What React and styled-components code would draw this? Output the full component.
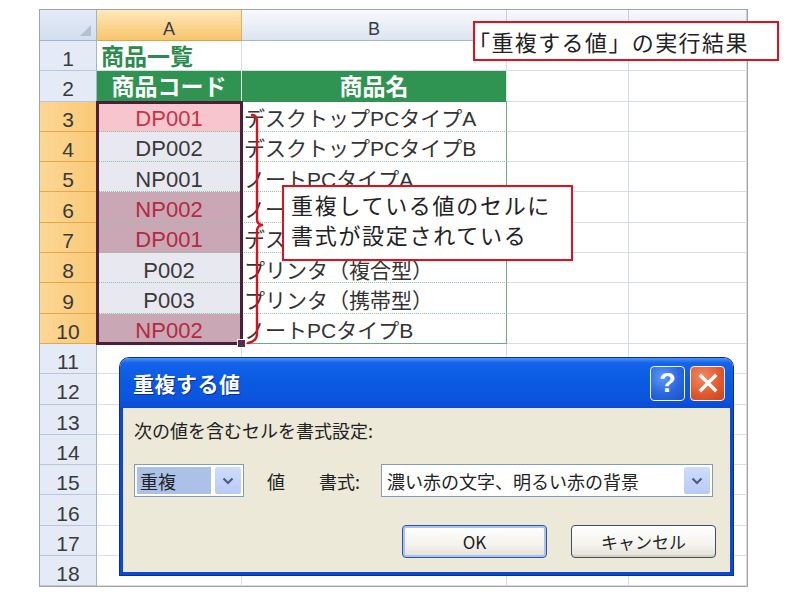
import React from 'react';
import styled, { createGlobalStyle, css } from 'styled-components';

const Global = createGlobalStyle`
  html, body { margin: 0; padding: 0; background: #fff; }
  body { font-family: "Liberation Sans", "Noto Sans CJK JP", sans-serif; }
`;

const JP = `"Liberation Sans", "Noto Sans CJK JP", sans-serif`;

const Page = styled.div`
  position: relative;
  width: 800px;
  height: 600px;
  overflow: hidden;
  background: #fff;
  padding: 9px 0 0 39px;
  box-sizing: border-box;
`;

const Sheet = styled.div`
  width: 707px;
  height: 576px;
  border: 1px solid #a3a3a3;
  display: grid;
  grid-template-columns: 57px 145px 265px 122px 1fr;
  grid-template-rows: 31px repeat(18, 30.3px);
  overflow: hidden;
`;

const Corner = styled.div`
  grid-row: 1;
  grid-column: 1;
  position: relative;
  background: linear-gradient(#e3ebf6, #d3dfef);
  border-right: 1px solid #9eb6ce;
  border-bottom: 1px solid #9eb6ce;
  &::after {
    content: '';
    position: absolute;
    right: 5px;
    bottom: 4px;
    border-left: 11px solid transparent;
    border-bottom: 11px solid #b3c1d3;
  }
`;

const ColHead = styled.div`
  grid-row: 1;
  grid-column: ${(p) => p.$c};
  display: flex;
  align-items: center;
  justify-content: center;
  font: 18px ${JP};
  color: #333d4a;
  padding-top: 8px;
  box-sizing: border-box;
  border-right: 1px solid ${(p) => (p.$sel ? '#e9ae5c' : '#c3d0e0')};
  border-bottom: 1px solid ${(p) => (p.$sel ? '#e2a24a' : '#9eb6ce')};
  background: ${(p) =>
    p.$sel
      ? 'linear-gradient(#fde9bd, #fbd692 50%, #f8c56c)'
      : 'linear-gradient(#f7f9fd, #e9eef6 55%, #dde4ee)'};
`;

const RowHead = styled.div`
  grid-row: ${(p) => p.$r + 1};
  grid-column: 1;
  display: flex;
  align-items: center;
  justify-content: center;
  font: 21px ${JP};
  color: #3a3a3a;
  padding-top: 7px;
  box-sizing: border-box;
  border-right: 1px solid #9eb6ce;
  border-bottom: 1px solid ${(p) => (p.$sel ? '#e8a648' : '#b6c7dc')};
  background: ${(p) => (p.$sel ? 'linear-gradient(90deg, #fcd796, #f9c977)' : '#e4ebf6')};
`;

const toneColors = {
  active: { bg: '#f7c5cd', fg: '#c83346' },
  dup: { bg: '#c9a7b5', fg: '#b52a40' },
  sel: { bg: '#e8e8f1', fg: '#3a3a3a' },
};

const Cell = styled.div`
  grid-row: ${(p) => p.$r + 1};
  grid-column: ${(p) => p.$c};
  box-sizing: border-box;
  display: flex;
  align-items: center;
  overflow: hidden;
  white-space: nowrap;
  line-height: 1.1;
  border-right: 1px solid #d6dce8;
  border-bottom: 1px solid #d6dce8;
  background: #fff;

  ${(p) =>
    p.$kind === 'title' &&
    css`
      font: 700 23px/1.1 ${JP};
      color: #2b8c4d;
      padding: 4px 0 0 4px;
    `}

  ${(p) =>
    p.$kind === 'head' &&
    css`
      justify-content: center;
      font: 700 23px/1.1 ${JP};
      color: #fff;
      background: #2f9352;
      padding-top: 3px;
      border-right-color: #d7e8dd;
      border-bottom-color: #2f9352;
    `}

  ${(p) =>
    p.$kind === 'code' &&
    css`
      justify-content: center;
      font: 22px/1.1 ${JP};
      padding-top: 6px;
      background: ${toneColors[p.$tone].bg};
      color: ${toneColors[p.$tone].fg};
      border-bottom: 1px dotted #8fc3a2;
    `}

  ${(p) =>
    p.$kind === 'name' &&
    css`
      font: 21px/1.1 ${JP};
      color: #333;
      padding: 5px 0 0 2px;
      border-right: 1px solid #68ad82;
      border-bottom: ${p.$last ? '1px solid #68ad82' : '1px dotted #8fc3a2'};
    `}
`;

const Selection = styled.div`
  grid-row: 4 / 12;
  grid-column: 2;
  position: relative;
  z-index: 2;
  border: 3px solid #4a1f37;
  margin: -1px;
  pointer-events: none;
`;

const FillHandle = styled.span`
  position: absolute;
  right: -6px;
  bottom: -6px;
  width: 7px;
  height: 7px;
  background: #5b2a47;
  border: 1px solid #fff;
`;

const BraceHolder = styled.div`
  grid-row: 4 / 12;
  grid-column: 3;
  z-index: 3;
  justify-self: start;
  margin-left: 4px;
  width: 22px;
  pointer-events: none;
`;

const Callout = styled.div`
  position: absolute;
  left: ${(p) => p.$x}px;
  top: ${(p) => p.$y}px;
  width: ${(p) => p.$w}px;
  height: ${(p) => p.$h}px;
  box-sizing: border-box;
  background: #fff;
  border: 2px solid #e1101c;
  font: 22px "Noto Sans CJK JP", sans-serif;
  color: #222;
  z-index: 5;
`;

const CalloutTitle = styled(Callout)`
  display: flex;
  align-items: center;
  padding-left: 0;
  letter-spacing: 1.4px;
  text-indent: -7px;
`;

const CalloutNote = styled(Callout)`
  padding: 2px 0 0 7px;
  line-height: 30px;
  letter-spacing: 1.7px;
`;

/* ---------- dialog ---------- */

const Dialog = styled.div`
  position: absolute;
  left: 120px;
  top: 358px;
  width: 613px;
  height: 217px;
  display: flex;
  flex-direction: column;
  border-radius: 9px 9px 0 0;
  box-shadow: 0 0 0 1px #0a2f9c;
  z-index: 10;
  font-family: "Noto Sans CJK JP", sans-serif;
`;

const TitleBar = styled.div`
  height: 50px;
  flex: none;
  display: flex;
  align-items: center;
  padding: 0 8px 0 13px;
  border-radius: 9px 9px 0 0;
  background: linear-gradient(#4a95fb 0%, #1463ea 10%, #0a5ae3 45%, #0b55de 80%, #0a4ad3 100%);
`;

const TitleText = styled.div`
  flex: 1;
  color: #fff;
  font: 700 21px "Noto Sans CJK JP", sans-serif;
  text-shadow: 1px 1px 0 #0c2d8c;
  letter-spacing: 0.5px;
`;

const CapButton = styled.div`
  width: 35px;
  height: 35px;
  box-sizing: border-box;
  border: 1.5px solid #f2f5ff;
  border-radius: 4px;
  display: flex;
  align-items: center;
  justify-content: center;
  margin-left: ${(p) => (p.$gap ? '5px' : '0')};
  background: ${(p) =>
    p.$red
      ? 'radial-gradient(circle at 35% 30%, #f28a62, #e25a2e 55%, #c8421c)'
      : 'radial-gradient(circle at 35% 30%, #5d98f5, #2966e0 55%, #1a4fcc)'};
  color: #fff;
  font: 700 27px "Liberation Sans", sans-serif;
`;

const Body = styled.div`
  flex: 1;
  background: #ece9d8;
  border: 3px solid #0a48d6;
  border-top: none;
  padding: 11px 12px 0 11px;
  display: flex;
  flex-direction: column;
`;

const Label = styled.div`
  font-size: 18px;
  line-height: 22px;
  color: #222;
`;

const FieldRow = styled.div`
  margin-top: 23px;
  height: 33px;
  display: flex;
  align-items: center;
`;

const Select = styled.div`
  width: ${(p) => p.$w}px;
  height: 33px;
  box-sizing: border-box;
  border: 1px solid #7f9db9;
  background: #fff;
  display: flex;
  align-items: center;
  padding: 2px;
  gap: 4px;
  margin-left: ${(p) => p.$ml || 0}px;
`;

const SelectValue = styled.div`
  flex: 1;
  height: 100%;
  display: flex;
  align-items: center;
  padding-left: 3px;
  font-size: 18px;
  color: #222;
  white-space: nowrap;
  background: ${(p) => (p.$picked ? '#abc1e8' : 'transparent')};
`;

const ArrowBox = styled.div`
  width: 26px;
  height: 100%;
  flex: none;
  background: linear-gradient(#cfdcfb, #b8cbf5);
  border-radius: 2px;
  display: flex;
  align-items: center;
  justify-content: center;
`;

const FieldText = styled.div`
  font-size: 18px;
  color: #222;
  margin-left: ${(p) => p.$ml}px;
`;

const ButtonRow = styled.div`
  margin-top: 28px;
  display: flex;
  justify-content: flex-end;
  gap: 24px;
  padding-right: 2px;
`;

const Btn = styled.div`
  width: 145px;
  height: 33px;
  box-sizing: border-box;
  border-radius: 4px;
  border: 1px solid ${(p) => (p.$default ? '#2e55a4' : '#3f4e63')};
  background: linear-gradient(#ffffff, #f4f3ee 60%, #e3e0d6);
  box-shadow: ${(p) => (p.$default ? 'inset 0 0 0 2px #a9c3f1' : 'inset 0 -2px 0 #d6d0c2')};
  display: flex;
  align-items: center;
  justify-content: center;
  font-size: 17px;
  color: #222;
`;

const Chevron = () => (
  <svg width="12" height="8" viewBox="0 0 12 8">
    <path d="M1.5 1.5 L6 6 L10.5 1.5" fill="none" stroke="#4a5f86" strokeWidth="2.2" />
  </svg>
);

const Brace = () => (
  <svg width="22" height="244" viewBox="0 0 22 244">
    <path
      d="M6 13 Q11 13 11 20 L11 117 Q11 123 17 123 Q11 123 11 129 L11 232 Q11 239 2 241"
      fill="none"
      stroke="#e0101a"
      strokeWidth="2.4"
      strokeLinecap="round"
    />
  </svg>
);

const codes = [
  ['DP001', 'active', 'デスクトップPCタイプA'],
  ['DP002', 'sel', 'デスクトップPCタイプB'],
  ['NP001', 'sel', 'ノートPCタイプA'],
  ['NP002', 'dup', 'ノートPCタイプB'],
  ['DP001', 'dup', 'デスクトップPCタイプA'],
  ['P002', 'sel', 'プリンタ（複合型）'],
  ['P003', 'sel', 'プリンタ（携帯型）'],
  ['NP002', 'dup', 'ノートPCタイプB'],
];

export default function App() {
  const cells = [];
  for (let r = 1; r <= 18; r++) {
    const sel = r >= 3 && r <= 10;
    cells.push(
      <RowHead key={`h${r}`} $r={r} $sel={sel}>
        {r}
      </RowHead>
    );
    if (r === 1) {
      cells.push(
        <Cell key="a1" $r={1} $c={2} $kind="title">
          商品一覧
        </Cell>,
        <Cell key="b1" $r={1} $c={3} />
      );
    } else if (r === 2) {
      cells.push(
        <Cell key="a2" $r={2} $c={2} $kind="head">
          商品コード
        </Cell>,
        <Cell key="b2" $r={2} $c={3} $kind="head">
          商品名
        </Cell>
      );
    } else if (sel) {
      const [code, tone, name] = codes[r - 3];
      cells.push(
        <Cell key={`a${r}`} $r={r} $c={2} $kind="code" $tone={tone}>
          {code}
        </Cell>,
        <Cell key={`b${r}`} $r={r} $c={3} $kind="name" $last={r === 10}>
          {name}
        </Cell>
      );
    } else {
      cells.push(<Cell key={`a${r}`} $r={r} $c={2} />, <Cell key={`b${r}`} $r={r} $c={3} />);
    }
    cells.push(<Cell key={`c${r}`} $r={r} $c={4} />, <Cell key={`d${r}`} $r={r} $c={5} />);
  }

  return (
    <>
      <Global />
      <Page>
        <Sheet>
          <Corner />
          <ColHead $c={2} $sel>
            A
          </ColHead>
          <ColHead $c={3}>B</ColHead>
          <ColHead $c={4} />
          <ColHead $c={5} />
          {cells}
          <Selection>
            <FillHandle />
          </Selection>
          <BraceHolder>
            <Brace />
          </BraceHolder>
        </Sheet>

        <CalloutTitle $x={473} $y={21} $w={306} $h={40}>
          「重複する値」の実行結果
        </CalloutTitle>
        <CalloutNote $x={282} $y={185} $w={291} $h={76}>
          重複している値のセルに
          <br />
          書式が設定されている
        </CalloutNote>

        <Dialog>
          <TitleBar>
            <TitleText>重複する値</TitleText>
            <CapButton>?</CapButton>
            <CapButton $red $gap>
              <svg width="20" height="20" viewBox="0 0 20 20">
                <path d="M3 3 L17 17 M17 3 L3 17" stroke="#fff" strokeWidth="3.4" strokeLinecap="square" />
              </svg>
            </CapButton>
          </TitleBar>
          <Body>
            <Label>次の値を含むセルを書式設定:</Label>
            <FieldRow>
              <Select $w={110}>
                <SelectValue $picked>重複</SelectValue>
                <ArrowBox>
                  <Chevron />
                </ArrowBox>
              </Select>
              <FieldText $ml={23}>値</FieldText>
              <FieldText $ml={34}>書式:</FieldText>
              <Select $w={332} $ml={21}>
                <SelectValue>濃い赤の文字、明るい赤の背景</SelectValue>
                <ArrowBox>
                  <Chevron />
                </ArrowBox>
              </Select>
            </FieldRow>
            <ButtonRow>
              <Btn $default>OK</Btn>
              <Btn>キャンセル</Btn>
            </ButtonRow>
          </Body>
        </Dialog>
      </Page>
    </>
  );
}
